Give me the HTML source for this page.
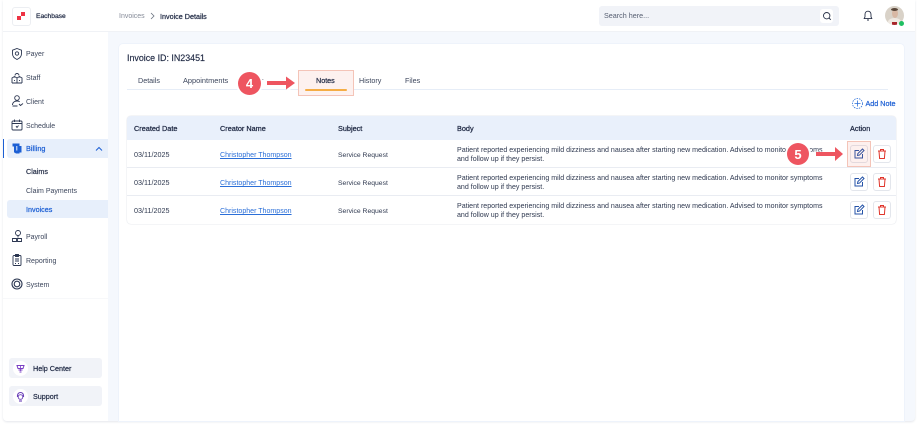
<!DOCTYPE html>
<html>
<head>
<meta charset="utf-8">
<style>
html,body{margin:0;padding:0;background:#fff}
#p{position:relative;width:918px;height:425px;overflow:hidden;background:#fff;font-family:"Liberation Sans",sans-serif;color:#1b2540}
#p div,#p span.a,#p a,#p svg{position:absolute}
.t{white-space:nowrap;font-size:7.2px;line-height:10px}
.m{-webkit-text-stroke:.22px currentColor}
.nav{left:26px;color:#3c465c;font-size:7px}
.ic{width:14px;height:14px;fill:none;stroke:#2a3550;stroke-width:.9}
.th{color:#1d2742;top:124px;-webkit-text-stroke:.25px #1d2742;font-size:7.3px}
.td{color:#2f3950}
.b{font-size:7.07px}
.s{font-size:6.8px}
.lnk{color:#2b6fd8;text-decoration:underline;font-size:7.05px}
.btn{width:16px;height:16px;border:1px solid #e3e6ec;border-radius:3px;background:#fff}
.ln{left:127px;width:769px;height:1px;background:#e9ecf2}
</style>
</head>
<body>
<div id="p">
<div style="left:3px;top:0;width:912px;height:420.500px;background:#f5f8fd;border-radius:0 0 4px 4px;box-shadow:0 1px 2px rgba(30,50,90,.12)"></div>
<div style="left:3px;top:0;width:105px;height:420.500px;background:#fff;border-radius:0 0 0 4px"></div>
<div style="left:3px;top:0;width:912px;height:31px;background:#fff;border-bottom:1px solid #f0f2f6"></div>
<div style="left:3px;top:298px;width:105px;height:1px;background:#f7f8fa"></div>

<div style="left:12px;top:7px;width:17px;height:17px;border:1px solid #eceef2;border-radius:3px;background:#fff"></div>
<div style="left:17px;top:16px;width:4px;height:4px;background:#ee3344"></div>
<div style="left:21px;top:12px;width:4px;height:4px;background:#ee3344"></div>
<div class="t m" style="left:36px;top:12px;color:#1d2742;font-size:6.7px">Eachbase</div>
<div class="t" style="left:119px;top:12px;color:#858b98;font-size:7px">Invoices</div>
<svg style="left:149px;top:12px" width="7" height="8" viewBox="0 0 7 8"><path d="M2 1l3 3-3 3" fill="none" stroke="#6b7280" stroke-width=".8"/></svg>
<div class="t m" style="left:160px;top:12px;color:#1d2742;font-size:7.2px">Invoice Details</div>

<div style="left:599px;top:6px;width:240px;height:20px;background:#f1f3f8;border-radius:3px"></div>
<div class="t" style="left:604px;top:11px;color:#555d70;font-size:7.2px">Search here...</div>
<div style="left:820px;top:9px;width:13px;height:14px;background:#fff;border-radius:3px"></div>
<svg style="left:822px;top:11px" width="10" height="10" viewBox="0 0 10 10"><circle cx="4.700" cy="4.700" r="3.200" fill="none" stroke="#2a3349" stroke-width=".9"/><path d="M7 7l1.800 1.800" stroke="#2a3349" stroke-width=".9"/></svg>
<svg style="left:862px;top:10px" width="12" height="12" viewBox="0 0 12 12"><path d="M6 1.200c-2 0-3 1.500-3 3.300v2.300L2.200 8.600h7.600L9 6.800V4.500C9 2.700 8 1.200 6 1.200zM5 10h2" fill="none" stroke="#2a3349" stroke-width=".9"/></svg>
<div style="left:885px;top:6px;width:19px;height:19px;border-radius:50%;background:#d9d2c8;overflow:hidden">
  <div style="left:7px;top:3px;width:6px;height:9px;border-radius:50%;background:#d8b8a4"></div>
  <div style="left:6px;top:2px;width:7px;height:3px;border-radius:50%;background:#5a473a"></div>
  <div style="left:3px;top:12px;width:13px;height:8px;border-radius:50%;background:#efe9e2"></div>
  <div style="left:7px;top:16px;width:5px;height:4px;background:#a8252a"></div>
</div>
<div style="left:899px;top:21px;width:5px;height:5px;border-radius:50%;background:#1fbf62"></div>

<!-- sidebar -->
<svg class="ic" style="left:10px;top:47px" viewBox="0 0 14 14"><path d="M7 1.500l4.500 1.700v3.600c0 2.700-2 4.600-4.500 5.700-2.500-1.100-4.500-3-4.500-5.700V3.200z"/><circle cx="7" cy="6.500" r="1.700"/></svg>
<div class="t nav" style="top:50px">Payer</div>
<svg class="ic" style="left:10px;top:71px" viewBox="0 0 14 14"><path d="M2 12V7l2.500-1.500L7 7v5M7 7l2.500-1.500L12 7v5M2 12h10M5 4.500a2 2 0 1 1 4 0M4.500 9v1M9.500 9v1"/></svg>
<div class="t nav" style="top:74px">Staff</div>
<svg class="ic" style="left:10px;top:94px" viewBox="0 0 14 14"><circle cx="7" cy="4" r="2.300"/><path d="M2.500 11c0-2.500 2-4 4.500-4 1 0 2 .3 2.700.8M2.500 12h5M9 10l1.500 1.500L13 9.500"/></svg>
<div class="t nav" style="top:98px">Client</div>
<svg class="ic" style="left:10px;top:118px" viewBox="0 0 14 14"><rect x="2" y="3" width="10" height="9" rx="1"/><path d="M2 5.500h10M4.500 1.500v2.500M9.500 1.500v2.500M6 8l1 1.500L8.500 7.500"/></svg>
<div class="t nav" style="top:122px">Schedule</div>

<div style="left:3px;top:139px;width:1px;height:19px;background:#1c5fd4"></div>
<div style="left:7px;top:139px;width:101px;height:19px;background:#e7effb;border-radius:3px 0 0 3px"></div>
<svg style="left:11px;top:142px" width="12" height="13" viewBox="0 0 12 13"><path d="M1.500 1.500H8.500V11.500H5L3.500 10.500H3V4.500H1.500z" fill="#1c5fd4"/><rect x="8.500" y="4" width="2" height="6.500" fill="#1c5fd4"/><path d="M5.800 4v4.500" stroke="#e7effb" stroke-width="1"/></svg>
<div class="t m" style="left:26px;top:144px;color:#1c5fd4;font-size:7.3px">Billing</div>
<svg style="left:95px;top:146px" width="8" height="6" viewBox="0 0 8 6"><path d="M1 4.500l3-3 3 3" fill="none" stroke="#1c5fd4"/></svg>
<div class="t m" style="left:26px;top:167px;color:#27314a;font-size:7.2px">Claims</div>
<div class="t nav" style="top:187px">Claim Payments</div>
<div style="left:7px;top:200px;width:101px;height:18px;background:#e7effb;border-radius:3px 0 0 3px"></div>
<div class="t m" style="left:26px;top:205px;color:#1c5fd4;font-size:7.2px">Invoices</div>

<svg class="ic" style="left:10px;top:229px" viewBox="0 0 14 14"><circle cx="8" cy="4" r="2.500"/><path d="M8 6.500v2M2.500 12.500v-3h4v3zM7.500 12.500v-3h4v3z"/></svg>
<div class="t nav" style="top:233px">Payroll</div>
<svg class="ic" style="left:10px;top:253px" viewBox="0 0 14 14"><rect x="3" y="2.500" width="8" height="10" rx="1"/><path d="M5.500 1.500h3v2h-3zM5 6h4M5 8h4M5 10.500h1M8 10.500h1"/></svg>
<div class="t nav" style="top:257px">Reporting</div>
<svg class="ic" style="left:10px;top:277px;stroke-width:1.100" viewBox="0 0 14 14"><circle cx="7" cy="7" r="5"/><circle cx="7" cy="7" r="2.800"/></svg>
<div class="t nav" style="top:281px">System</div>

<div style="left:9px;top:358px;width:93px;height:20px;background:#f1f3f8;border-radius:3px"></div>
<div style="left:13px;top:361px;width:15px;height:15px;background:#fff;border-radius:50%"></div>
<svg style="left:15px;top:363px" width="11" height="11" viewBox="0 0 11 11"><path d="M2 2.500h7L8 5.500H3zM3.500 7h4M4.500 9h2" fill="none" stroke="#7a3fc4"/><path d="M5.500 3v5" stroke="#7a3fc4" stroke-width=".8"/></svg>
<div class="t m" style="left:33px;top:364px;color:#1d2742">Help Center</div>
<div style="left:9px;top:386px;width:93px;height:20px;background:#f1f3f8;border-radius:3px"></div>
<div style="left:13px;top:389px;width:15px;height:15px;background:#fff;border-radius:50%"></div>
<svg style="left:15px;top:391px" width="11" height="11" viewBox="0 0 11 11"><path d="M2.500 6V4.500a3 3 0 0 1 6 0V6" fill="none" stroke="#6a3fb8" stroke-width="1.100"/><circle cx="5.500" cy="6" r="2.300" fill="none" stroke="#6a3fb8" stroke-width=".9"/><path d="M4 10h3" fill="none" stroke="#6a3fb8" stroke-width="1.100"/></svg>
<div class="t m" style="left:33px;top:392px;color:#1d2742">Support</div>

<!-- card -->
<div style="left:118.500px;top:43.500px;width:785px;height:377px;background:#fff;border-radius:4px 4px 0 0;box-shadow:0 0 0 1px #eef3fb"></div>
<div class="t m" style="left:127px;top:52px;font-size:8.9px;line-height:12px;color:#1d2742;-webkit-text-stroke:.15px #1d2742">Invoice ID: IN23451</div>
<div style="left:127px;top:89px;width:761px;height:1px;background:#e6edf7"></div>
<div class="t nav" style="left:138px;top:76px;font-size:7.2px">Details</div>
<div class="t nav" style="left:183px;top:76px;font-size:7.4px">Appointments</div>
<div class="t nav" style="left:261px;top:76px;font-size:7.2px">r</div>
<div style="left:298px;top:70px;width:56px;height:26px;background:#fdf1ef;border:.5px solid #f4c4b8;box-sizing:border-box"></div>
<div class="t m" style="left:316px;top:76px;color:#1d2742">Notes</div>
<div style="left:305px;top:89px;width:42px;height:2px;background:#f5ad45;border-radius:1px"></div>
<div class="t nav" style="left:359px;top:76px;font-size:7.2px">History</div>
<div class="t nav" style="left:405px;top:76px;font-size:7.2px">Files</div>

<div style="left:238px;top:71.500px;width:23px;height:23px;border-radius:50%;background:#ee5560;box-shadow:0 0 0 2px #fff"></div>
<div class="t" style="left:238px;top:74.500px;width:23px;text-align:center;color:#fff;font-size:13px;line-height:17px;font-weight:700">4</div>
<svg style="left:263px;top:72px" width="36" height="22" viewBox="0 0 36 22"><path d="M2 8.500h21V4l11 9-10 7v-5H2z" fill="#fff" opacity=".9"/><path d="M4 9h19V4.500L32 11l-9 6.500V13H4z" fill="#ee5560"/></svg>

<svg style="left:851px;top:97px" width="13" height="13" viewBox="0 0 13 13"><circle cx="6.500" cy="6.500" r="5" fill="none" stroke="#2b6fd8" stroke-width=".8" stroke-dasharray="1.500 1"/><path d="M6.500 3.500v6M3.500 6.500h6" stroke="#2b6fd8" stroke-width=".8"/></svg>
<div class="t m" style="left:865.500px;top:99px;color:#1c5fd4;font-size:7.200px">Add Note</div>

<!-- table -->
<div style="left:126.500px;top:116px;width:769.500px;height:107.500px;border-radius:4px;background:#fff;box-shadow:0 0 1px rgba(40,60,100,.3)"></div>
<div style="left:126.500px;top:116px;width:769.500px;height:24px;background:#e9f0fb;border-radius:4px 4px 0 0"></div>
<div class="t th" style="left:134px">Created Date</div>
<div class="t th" style="left:220px">Creator Name</div>
<div class="t th" style="left:338px">Subject</div>
<div class="t th" style="left:457px">Body</div>
<div class="t th" style="left:850px">Action</div>
<div class="ln" style="top:167px"></div>
<div class="ln" style="top:195px"></div>

<div class="t td" style="left:134px;top:150px">03/11/2025</div>
<div class="t lnk" style="left:220px;top:151px">Christopher Thompson</div>
<div class="t td s" style="left:338px;top:151px">Service Request</div>
<div class="t td b" style="left:457px;top:146px">Patient reported experiencing mild dizziness and nausea after starting new medication. Advised to monitor symptoms</div>
<div class="t td b" style="left:457px;top:155px">and follow up if they persist.</div>

<div class="t td" style="left:134px;top:178px">03/11/2025</div>
<div class="t lnk" style="left:220px;top:179px">Christopher Thompson</div>
<div class="t td s" style="left:338px;top:179px">Service Request</div>
<div class="t td b" style="left:457px;top:174px">Patient reported experiencing mild dizziness and nausea after starting new medication. Advised to monitor symptoms</div>
<div class="t td b" style="left:457px;top:183px">and follow up if they persist.</div>

<div class="t td" style="left:134px;top:206px">03/11/2025</div>
<div class="t lnk" style="left:220px;top:207px">Christopher Thompson</div>
<div class="t td s" style="left:338px;top:207px">Service Request</div>
<div class="t td b" style="left:457px;top:202px">Patient reported experiencing mild dizziness and nausea after starting new medication. Advised to monitor symptoms</div>
<div class="t td b" style="left:457px;top:211px">and follow up if they persist.</div>

<!-- action buttons -->
<div class="btn" style="left:850px;top:145px"></div>
<div class="btn" style="left:873px;top:145px"></div>
<div class="btn" style="left:850px;top:173px"></div>
<div class="btn" style="left:873px;top:173px"></div>
<div class="btn" style="left:850px;top:201px"></div>
<div class="btn" style="left:873px;top:201px"></div>
<svg style="left:853px;top:148px" width="12" height="12" viewBox="0 0 12 12"><path d="M6 2.500H2v7.500h7.500V6M4.500 7.500l.4-2L9.500 1l1.500 1.500-4.500 4.600z" fill="none" stroke="#2553a8"/></svg>
<svg style="left:853px;top:176px" width="12" height="12" viewBox="0 0 12 12"><path d="M6 2.500H2v7.500h7.500V6M4.500 7.500l.4-2L9.500 1l1.500 1.500-4.500 4.600z" fill="none" stroke="#2553a8"/></svg>
<svg style="left:853px;top:204px" width="12" height="12" viewBox="0 0 12 12"><path d="M6 2.500H2v7.500h7.500V6M4.500 7.500l.4-2L9.500 1l1.500 1.500-4.500 4.600z" fill="none" stroke="#2553a8"/></svg>
<svg style="left:876px;top:148px" width="12" height="12" viewBox="0 0 12 12"><path d="M2 3h8M4.500 3V1.500h3V3M3 3l.6 7.500h4.800L9 3" fill="none" stroke="#e0352b"/></svg>
<svg style="left:876px;top:176px" width="12" height="12" viewBox="0 0 12 12"><path d="M2 3h8M4.500 3V1.500h3V3M3 3l.6 7.500h4.800L9 3" fill="none" stroke="#e0352b"/></svg>
<svg style="left:876px;top:204px" width="12" height="12" viewBox="0 0 12 12"><path d="M2 3h8M4.500 3V1.500h3V3M3 3l.6 7.500h4.800L9 3" fill="none" stroke="#e0352b"/></svg>

<div style="left:847px;top:141px;width:24px;height:26px;background:rgba(240,110,90,.1);border:.5px solid #f4c4b8;box-sizing:border-box"></div>
<div style="left:787px;top:143px;width:22px;height:22px;border-radius:50%;background:#ee5560;box-shadow:0 0 0 2px #fff"></div>
<div class="t" style="left:787px;top:145.500px;width:22px;text-align:center;color:#fff;font-size:13px;line-height:17px;font-weight:700">5</div>
<svg style="left:812px;top:143px" width="36" height="22" viewBox="0 0 36 22"><path d="M2 8.500h21V4l11 9-10 7v-5H2z" fill="#fff" opacity=".9"/><path d="M4 9h19V4l8 7-8 7v-5H4z" fill="#ee5560"/></svg>
</div>
</body>
</html>
